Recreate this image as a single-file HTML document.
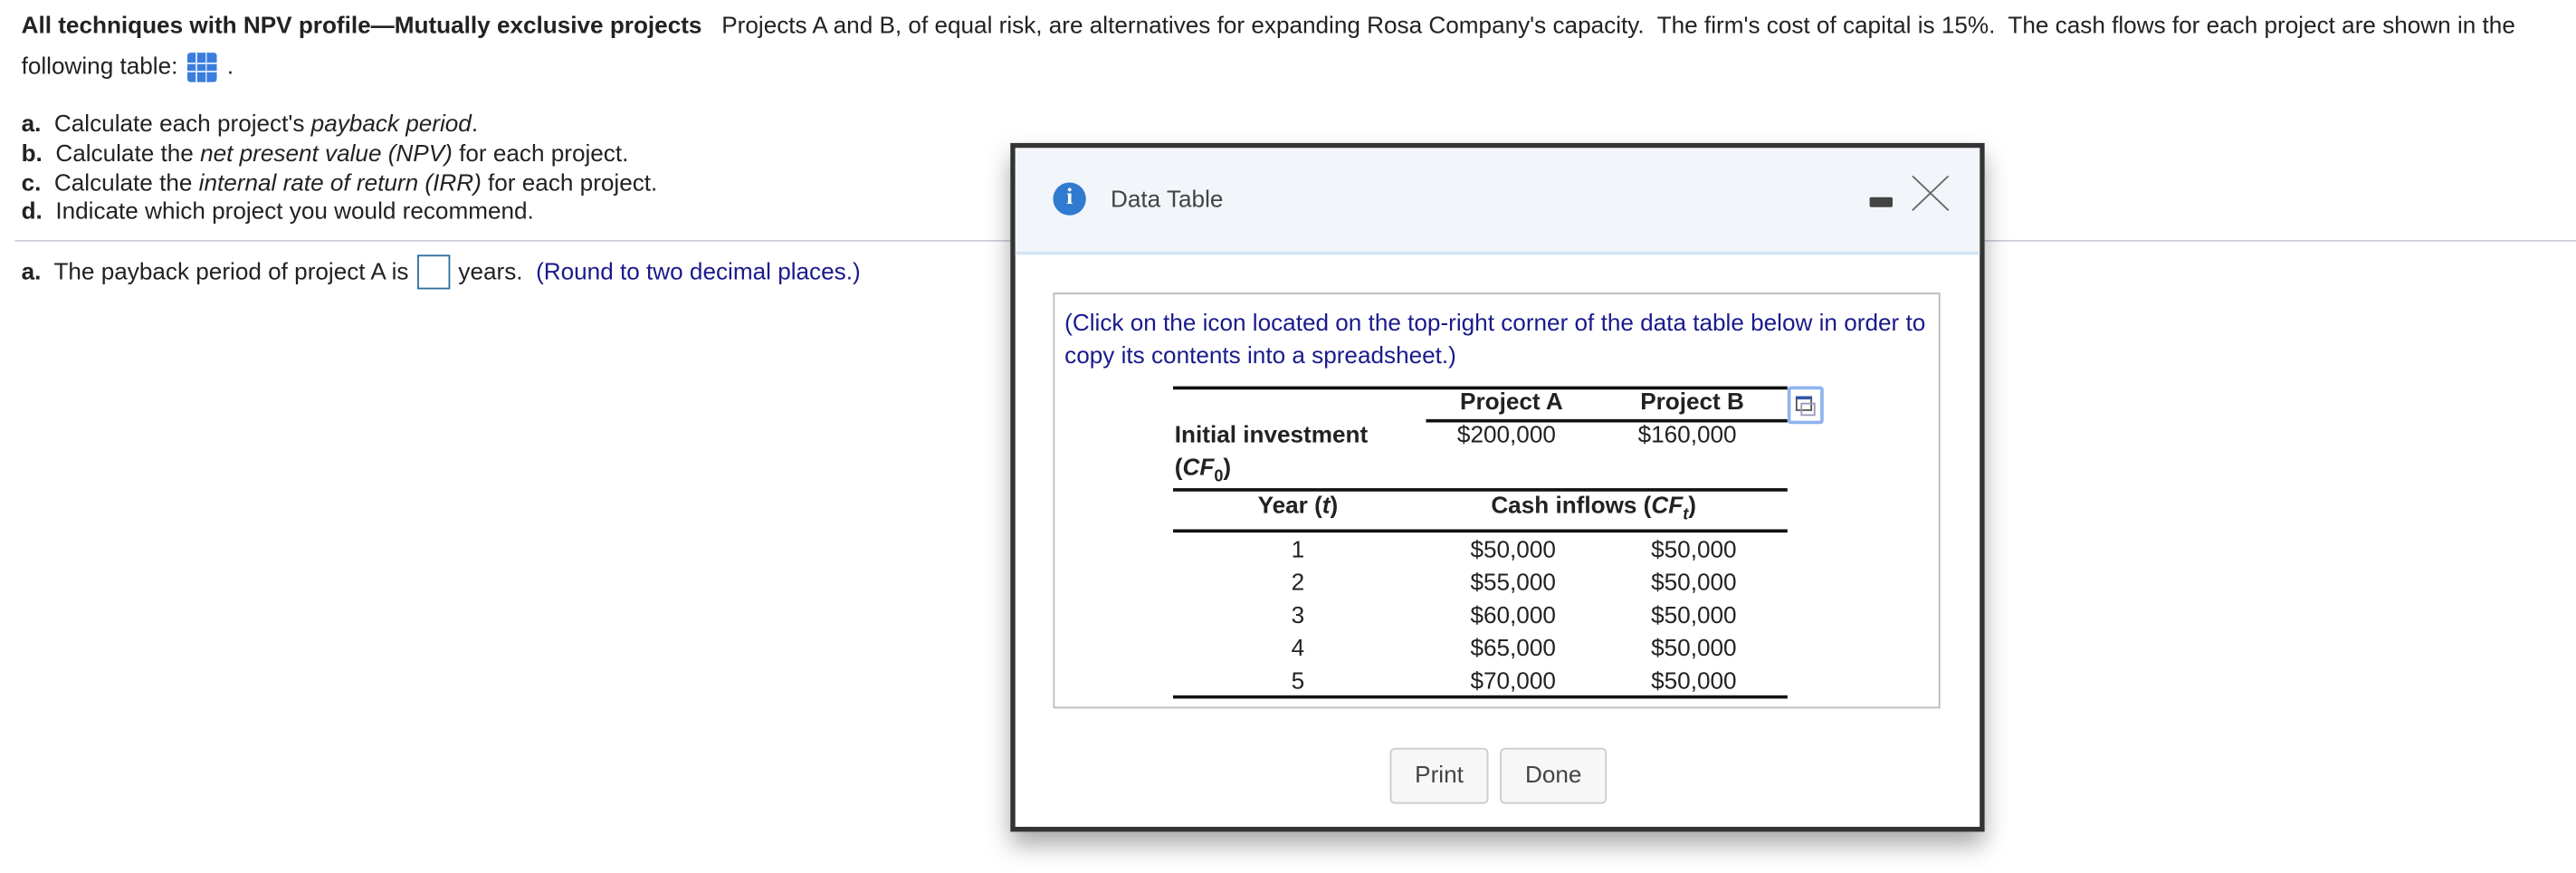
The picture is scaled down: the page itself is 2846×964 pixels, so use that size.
<!DOCTYPE html>
<html><head><meta charset="utf-8"><style>
html,body{margin:0;padding:0;background:#fff;overflow:hidden;width:2846px;height:964px}
#w{position:absolute;left:0;top:0;width:1568px;height:531px;transform:scale(1.8151);transform-origin:0 0;font-family:"Liberation Sans",Arial,sans-serif;font-size:14.4px;color:#222}
.a{position:absolute;white-space:nowrap;line-height:16px}
b{font-weight:bold}
.blue{color:#1a1a8c}
.hl{position:absolute;height:2px;background:#111}
.r{text-align:right}
.c{text-align:center}
</style></head><body><div id="w">
<div class="a" style="left:13px;top:8px"><b>All techniques with NPV profile—Mutually exclusive projects</b>&nbsp;&nbsp; Projects A and B, of equal risk, are alternatives for expanding Rosa Company's capacity.&nbsp; The firm's cost of capital is 15%.&nbsp; The cash flows for each project are shown in the</div>
<div class="a" style="left:13px;top:32px">following table: <span style="display:inline-block;width:18px;height:18px;vertical-align:-5px;margin:0 2px;background:#3b7ddd;border-radius:2px;position:relative;background-image:linear-gradient(90deg,transparent 5px,#cfe0ff 5px,#cfe0ff 6px,transparent 6px,transparent 11px,#cfe0ff 11px,#cfe0ff 12px,transparent 12px),linear-gradient(180deg,transparent 6px,#cfe0ff 6px,#cfe0ff 7px,transparent 7px,transparent 11px,#cfe0ff 11px,#cfe0ff 12px,transparent 12px)"></span> .</div>
<div class="a" style="left:13px;top:68px"><b>a.</b>&nbsp; Calculate each project's <i>payback period</i>.</div>
<div class="a" style="left:13px;top:86px"><b>b.</b>&nbsp; Calculate the <i>net present value (NPV)</i> for each project.</div>
<div class="a" style="left:13px;top:104px"><b>c.</b>&nbsp; Calculate the <i>internal rate of return (IRR)</i> for each project.</div>
<div class="a" style="left:13px;top:121px"><b>d.</b>&nbsp; Indicate which project you would recommend.</div>
<div style="position:absolute;left:9px;top:146px;width:1559px;height:1px;background:#ccd0da"></div>
<div class="a" style="left:13px;top:158px"><b>a.</b>&nbsp; The payback period of project A is</div>
<div style="position:absolute;left:254px;top:155px;width:18px;height:19px;border:1px solid #2e6e9e"></div>
<div class="a" style="left:279px;top:158px">years.&nbsp; <span class="blue">(Round to two decimal places.)</span></div>

<div style="position:absolute;left:615px;top:87px;width:587px;height:413px;border:3px solid #333;background:#fff;box-shadow:0 8px 14px rgba(0,0,0,0.35)">
 <div style="position:absolute;left:0;top:0;width:587px;height:63px;background:#f2f5fa;border-bottom:2px solid #d4e5f5"></div>
 <div style="position:absolute;left:23px;top:21px;width:20px;height:20px;border-radius:50%;background:#2f7bd0;color:#fff;font:bold 14px 'Liberation Serif',serif;text-align:center;line-height:20px">i</div>
 <div class="a" style="left:58px;top:24px;color:#444">Data Table</div>
 <div style="position:absolute;left:520px;top:30px;width:14px;height:6px;background:#444;border-radius:1px"></div>
 <svg style="position:absolute;left:544px;top:17px" width="26" height="22"><path d="M2 0 L24 21 M24 0 L2 21" stroke="#666" stroke-width="1"/></svg>
 <div style="position:absolute;left:23px;top:88px;width:538px;height:251px;border:1px solid #bbb"></div>
 <div class="a blue" style="left:30px;top:97px;line-height:20px">(Click on the icon located on the top-right corner of the data table below in order to<br>copy its contents into a spreadsheet.)</div>
</div>
<div class="hl" style="left:714px;top:235px;width:374px"></div>
<div class="a c" style="left:880px;top:237px;width:80px"><b>Project A</b></div>
<div class="a c" style="left:990px;top:237px;width:80px"><b>Project B</b></div>
<div class="hl" style="left:868px;top:255px;width:220px"></div>
<div style="position:absolute;left:1088px;top:235px;width:18px;height:19px;border:2px solid #8fb3f0;border-radius:2px;background:#fff"><div style="position:absolute;left:3px;top:4px;width:8px;height:6px;border:1px solid #555;border-top:2px solid #3355aa"></div><div style="position:absolute;left:6px;top:8px;width:7px;height:6px;border:1px solid #99b"></div></div>
<div class="a" style="left:715px;top:257px"><b>Initial investment</b></div>
<div class="a" style="left:715px;top:277px"><b>(<i>CF</i><sub style="font-size:10px">0</sub>)</b></div>
<div class="a r" style="left:860px;top:257px;width:87px">$200,000</div>
<div class="a r" style="left:970px;top:257px;width:87px">$160,000</div>
<div class="hl" style="left:714px;top:297px;width:374px"></div>
<div class="a c" style="left:750px;top:300px;width:80px"><b>Year (<i>t</i>)</b></div>
<div class="a c" style="left:900px;top:300px;width:140px"><b>Cash inflows (<i>CF<sub style="font-size:10px">t</sub></i>)</b></div>
<div class="hl" style="left:714px;top:322px;width:374px"></div>
<div class="a c" style="left:770px;top:325px;width:40px;line-height:20px">1<br>2<br>3<br>4<br>5</div>
<div class="a r" style="left:860px;top:325px;width:87px;line-height:20px">$50,000<br>$55,000<br>$60,000<br>$65,000<br>$70,000</div>
<div class="a r" style="left:970px;top:325px;width:87px;line-height:20px">$50,000<br>$50,000<br>$50,000<br>$50,000<br>$50,000</div>
<div class="hl" style="left:714px;top:423px;width:374px"></div>
<div style="position:absolute;left:846px;top:455px;width:58px;height:32px;border:1px solid #ccc;border-radius:3px;background:#f7f7f7;text-align:center;line-height:32px;color:#444">Print</div>
<div style="position:absolute;left:913px;top:455px;width:63px;height:32px;border:1px solid #ccc;border-radius:3px;background:#f7f7f7;text-align:center;line-height:32px;color:#444">Done</div>
</div></body></html>
